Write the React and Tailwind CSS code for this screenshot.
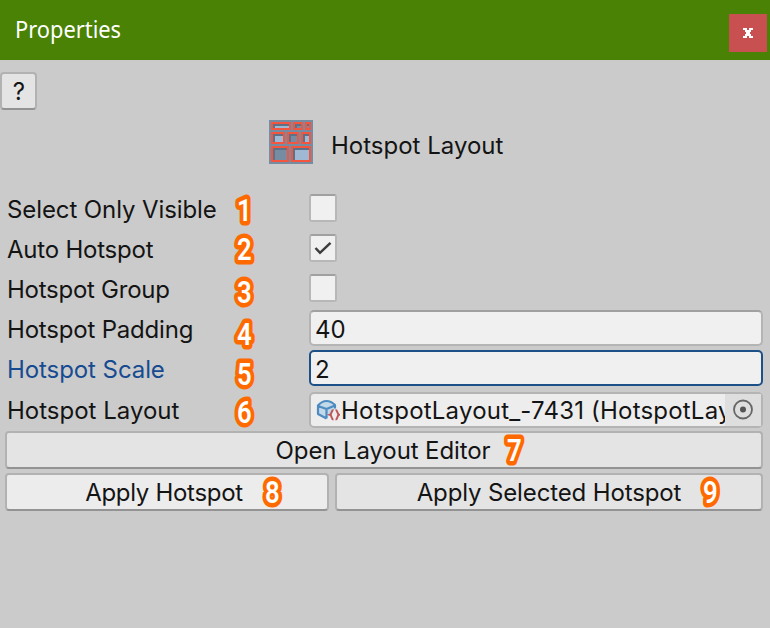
import React from "react";

const BUTTON =
  "relative flex items-center justify-center rounded-[4px] border-2 border-[#b2b2b2] border-b-[#939393]";

const FIELD = "flex h-9 w-[454px] items-center rounded-[5px] border-2";

function Badge({ n, className }) {
  return (
    <svg
      width="30"
      height="36"
      viewBox="0 0 30 36"
      className={"absolute overflow-visible " + className}
    >
      <text
        x="18.4"
        y="28"
        textAnchor="middle"
        transform="scale(0.83 1)"
        className="fill-white stroke-[#ff6a00] stroke-[9px] font-['Roboto'] text-[31px] font-semibold [paint-order:stroke]"
        strokeLinejoin="round"
        strokeLinecap="round"
      >
        {n}
      </text>
    </svg>
  );
}

function Row({ label, n, badge, tracking = "", active, className = "h-10", children }) {
  return (
    <div className={"relative flex items-center pl-[7px] " + className}>
      <span
        className={
          "w-[302px] shrink-0 " +
          tracking +
          (active ? " text-[#174b91]" : " text-[#141414]")
        }
      >
        {label}
      </span>
      <Badge n={n} className={"left-[229px] " + badge} />
      {children}
    </div>
  );
}

function Checkbox({ checked }) {
  return (
    <span className="-mt-1 block h-7 w-7 rounded-[3px] border-2 border-[#b7b7b7] border-t-[#a0a0a0] bg-[#f0f0f0]">
      {checked && (
        <svg viewBox="0 0 24 24" className="h-6 w-6" fill="none">
          <path d="M4.5 12 L9 16.8 L19.5 6.8" stroke="#3c3c3c" strokeWidth="2.5" />
        </svg>
      )}
    </span>
  );
}

function LayoutIcon() {
  return (
    <svg width="44" height="44" viewBox="0 0 44 44" shapeRendering="crispEdges">
      <rect width="44" height="44" fill="#758ca3" />
      <g fill="#9fb8d3">
        <path d="M4 4h16v4H4zM4 14h10v8H4zM34 14h6v8h-6zM24 28h16v12H24z" />
      </g>
      <g fill="#5e7186">
        <path d="M4 4h16v2H6v2H4zM26 4h6v2h-4v2h-2zM38 4h2v2h-2zM4 14h10v2H6v6H4zM20 14h8v2h-6v6h-2zM34 14h6v2h-4v6h-2zM4 28h14v2H6v10H4zM24 28h16v2H26v10h-2z" />
      </g>
      <g fill="none" stroke="#f3553f" strokeWidth="2">
        <path d="M3 3h18v6H3zM25 3h8v6h-8zM37 3h4v6h-4zM3 13h12v10H3zM19 13h10v10H19zM33 13h8v10h-8zM3 27h16v14H3zM23 27h18v14H23z" />
      </g>
    </svg>
  );
}

function AssetIcon() {
  return (
    <svg width="24" height="24" viewBox="0 0 24 24" fill="none" className="shrink-0">
      <path d="M2 7 L10.5 3 L19 6.5 V11 L12 19 L10.5 20.5 L2 16Z" fill="#c3d8e8" />
      <path
        d="M10.5 20.5 L2 16 V7.5 Q6 3 10.5 3 Q15 3 19 7 V10.5 M2 8 L10.5 11 L19 7.5 M10.5 11 V20.5"
        stroke="#4d8bc0"
        strokeWidth="2.2"
        strokeLinejoin="round"
      />
      <path
        d="M17.5 12 C15 12 16.2 16 14 16.8 C16.2 17.5 15 21.5 17.5 21.5 M19.5 12 C22 12 20.8 16 23 16.8 C20.8 17.5 22 21.5 19.5 21.5"
        stroke="#bf5656"
        strokeWidth="2"
      />
    </svg>
  );
}

export default function App() {
  return (
    <div className="flex h-[628px] w-[770px] flex-col overflow-hidden bg-[#cbcbcb] font-[Inter,sans-serif] text-2xl leading-8 whitespace-nowrap text-[#141414]">
      <header className="flex h-[60px] shrink-0 justify-between bg-[#498205] pr-[3px] pl-[15px]">
        <h1 className="h-[60px] origin-left scale-x-[0.91] font-['Noto_Sans',sans-serif] text-2xl leading-[57px] text-white">
          Properties
        </h1>
        <button className="mt-[14px] flex h-[38px] w-[38px] items-center justify-center bg-[#c95050]">
          <svg width="10" height="10" viewBox="0 0 10 10" shapeRendering="crispEdges" fill="#fff">
            <path d="M0 0h4v2h2V0h4v2H8v2H7v2h1v2h2v2H6V8H4v2H0V8h2V6h1V4H2V2H0z" />
          </svg>
        </button>
      </header>

      <button className={BUTTON + " mt-3 h-[38px] w-[37px] shrink-0 bg-[#e4e4e4] pt-[2px] pl-[1px]"}>
        ?
      </button>

      <div className="mt-[10px] ml-[269px] flex h-11 shrink-0 items-center gap-[18px]">
        <LayoutIcon />
        <span className="pt-[7px]">Hotspot Layout</span>
      </div>

      <main className="mt-[26px] flex flex-col">
        <Row label="Select Only Visible" n="1" badge="top-[3px]" tracking="tracking-[-0.1px]">
          <Checkbox />
        </Row>
        <Row label="Auto Hotspot" n="2" badge="top-[2px]" tracking="tracking-[-0.22px]">
          <Checkbox checked />
        </Row>
        <Row label="Hotspot Group" n="3" badge="top-[5px]" tracking="tracking-[-0.26px]">
          <Checkbox />
        </Row>
        <Row label="Hotspot Padding" n="4" badge="top-[7px]" tracking="tracking-[-0.19px]">
          <div className={FIELD + " -mt-1 border-[#b4b4b4] border-t-[#a0a0a0] bg-[#f0f0f0] pt-[3px] pl-1"}>
            40
          </div>
        </Row>
        <Row label="Hotspot Scale" n="5" badge="top-[7px]" tracking="tracking-[-0.08px]" active>
          <div className={FIELD + " -mt-1 border-[#1d5087] bg-[#f0f0f0] pt-[3px] pl-1"}>2</div>
        </Row>
        <Row label="Hotspot Layout" n="6" badge="top-[5px]" className="h-[41px]">
          <div className={FIELD + " -mt-0.5 border-[#b4b4b4] bg-[#ededed] pl-[5px]"}>
            <AssetIcon />
            <span className="ml-[1px] w-[384px] shrink-0 overflow-hidden pt-[2px] tracking-[0.2px]">
              HotspotLayout_-7431 (HotspotLayout)
            </span>
            <span className="flex h-8 grow items-center justify-center bg-[#dedede]">
              <svg width="22" height="22" viewBox="0 0 22 22" fill="none">
                <circle cx="11" cy="10.5" r="9" stroke="#666" strokeWidth="1.8" />
                <circle cx="11" cy="10.5" r="3" fill="#555" />
              </svg>
            </span>
          </div>
        </Row>
        <div className="flex flex-col gap-1 pr-[7px] pl-[5px]">
          <button className={BUTTON + " h-[38px] w-full bg-[#e4e4e4]"}>
            <span className="pt-[2px] pr-[2px] tracking-[-0.11px]">Open Layout Editor</span>
            <Badge n="7" className="top-0 left-[492px]" />
          </button>
          <div className="flex gap-[6px]">
            <button className={BUTTON + " h-[38px] w-[324px] bg-[#ececec]"}>
              <span className="pt-[2px] pr-[6px] tracking-[-0.3px]">Apply Hotspot</span>
              <Badge n="8" className="top-0 left-[250px]" />
            </button>
            <button className={BUTTON + " h-[38px] grow bg-[#e4e4e4]"}>
              <span className="pt-[2px] tracking-[-0.13px]">Apply Selected Hotspot</span>
              <Badge n="9" className="top-0 left-[358px]" />
            </button>
          </div>
        </div>
      </main>
    </div>
  );
}
